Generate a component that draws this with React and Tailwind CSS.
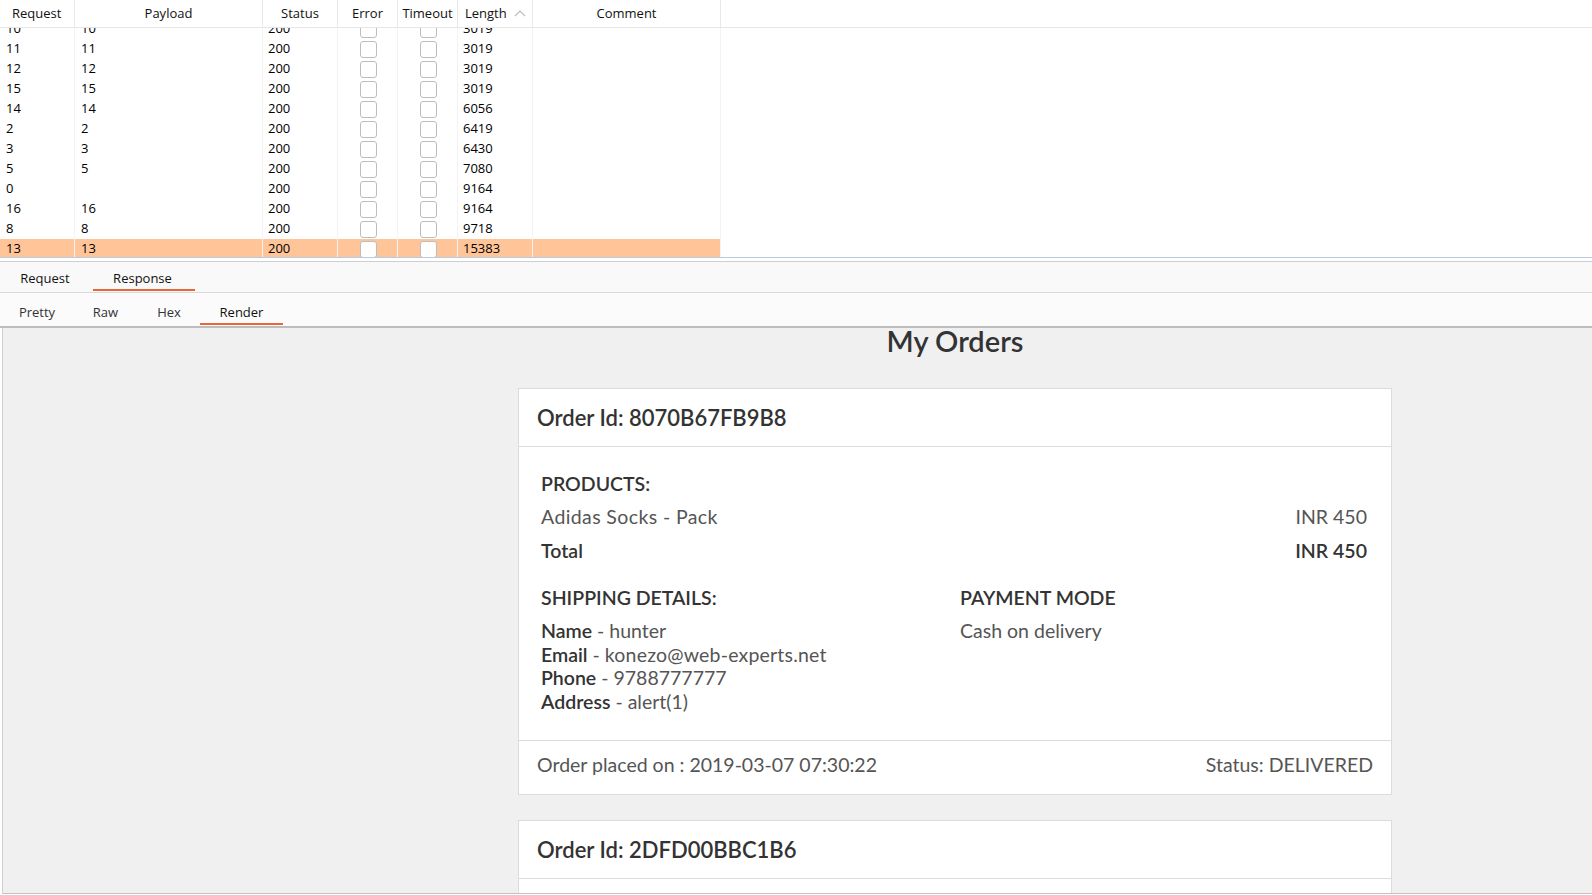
import React from "react";

const rows = [
  ["10", "10", "200", "3019"],
  ["11", "11", "200", "3019"],
  ["12", "12", "200", "3019"],
  ["15", "15", "200", "3019"],
  ["14", "14", "200", "6056"],
  ["2", "2", "200", "6419"],
  ["3", "3", "200", "6430"],
  ["5", "5", "200", "7080"],
  ["0", "", "200", "9164"],
  ["16", "16", "200", "9164"],
  ["8", "8", "200", "9718"],
  ["13", "13", "200", "15383"],
];

function Check() {
  return <div className="w-[17px] h-[17px] rounded-[3px] border border-[#bdbdbd] bg-white" />;
}

function Table() {
  return (
    <div className="h-[257px] bg-white">
      <div className="flex h-[28px] border-b border-[#e6e6e6] text-[13px] text-[#111]">
        <div className="w-[75px] h-full flex items-center pl-[12px] border-r border-[#e8e8e8]">Request</div>
        <div className="w-[188px] h-full flex items-center justify-center border-r border-[#e8e8e8]">Payload</div>
        <div className="w-[75px] h-full flex items-center justify-center border-r border-[#e8e8e8]">Status</div>
        <div className="w-[60px] h-full flex items-center justify-center border-r border-[#e8e8e8]">Error</div>
        <div className="w-[60px] h-full flex items-center justify-center border-r border-[#e8e8e8]">Timeout</div>
        <div className="w-[75px] h-full flex items-center pl-[7px] gap-[7px] border-r border-[#e8e8e8]">
          <span>Length</span>
          <svg width="12" height="8" viewBox="0 0 12 8" className="mt-[-2px]">
            <polyline points="1,7 6,2 11,7" fill="none" stroke="#bdbdbd" strokeWidth="1.2" />
          </svg>
        </div>
        <div className="w-[188px] h-full flex items-center justify-center border-r border-[#e8e8e8]">Comment</div>
        <div className="flex-1" />
      </div>
      <div className="h-[229px] overflow-hidden">
        <div className="mt-[-9px] text-[13px] text-[#000]">
          {rows.map((r, i) => {
            const sel = i === rows.length - 1;
            return (
              <div key={i} className={"flex h-[20px] w-[721px] " + (sel ? "bg-[#ffc599]" : "bg-white")}>
                <div className="w-[75px] h-full flex items-center pl-[6px] border-r border-[#f3f3f3]">{r[0]}</div>
                <div className="w-[188px] h-full flex items-center pl-[6px] border-r border-[#f3f3f3]">{r[1]}</div>
                <div className="w-[75px] h-full flex items-center pl-[5px] border-r border-[#f3f3f3]">{r[2]}</div>
                <div className="w-[60px] h-full flex items-center justify-center pl-[2px] border-r border-[#f3f3f3]"><Check /></div>
                <div className="w-[60px] h-full flex items-center justify-center pl-[2px] border-r border-[#f3f3f3]"><Check /></div>
                <div className="w-[75px] h-full flex items-center pl-[5px] border-r border-[#f3f3f3]">{r[3]}</div>
                <div className="w-[188px] h-full border-r border-[#f3f3f3]" />
              </div>
            );
          })}
        </div>
      </div>
    </div>
  );
}

function Tabs() {
  return (
    <div>
      <div className="h-px bg-[#b7cbe3]" />
      <div className="h-[3px] bg-white" />
      <div className="h-px bg-[#cfcfcf]" />
      <div className="h-[31px] bg-[#f9f9f9] border-b border-[#d9d9d9] flex text-[13px] text-[#111]">
        <div className="w-[90px] h-full flex items-center justify-center pt-[3px]">Request</div>
        <div className="w-[3px]" />
        <div className="w-[102px] h-full flex items-center justify-center pt-[3px] relative">
          <span className="pr-[3px]">Response</span>
          <div className="absolute left-0 right-0 bottom-[1px] h-[2px] bg-[#e8673a]" />
        </div>
      </div>
      <div className="h-[35px] bg-[#fbfbfb] border-b-2 border-[#bcbcbc] flex pl-px text-[13px] text-[#333]">
        <div className="w-[72px] h-full flex items-center justify-center pt-[6px]">Pretty</div>
        <div className="w-[65px] h-full flex items-center justify-center pt-[6px]">Raw</div>
        <div className="w-[62px] h-full flex items-center justify-center pt-[6px]">Hex</div>
        <div className="w-[83px] h-full flex items-center justify-center pt-[6px] relative text-[#111]">
          Render
          <div className="absolute left-0 right-0 bottom-px h-[2px] bg-[#e8673a]" />
        </div>
      </div>
    </div>
  );
}

function OrderCard({ id, full }) {
  return (
    <div className="bg-white border border-[#dcdcdc]">
      <div className="h-[58px] border-b border-[#dcdcdc] pl-[18px] flex items-center text-[22px] font-semibold text-[#333] pb-[1px]">
        Order Id: {id}
      </div>
      {full && (
        <>
          <div className="pl-[22px] pr-[24px] pt-[20px] pb-[27px] text-[19.5px] text-[#555]">
            <div className="h-[33px] leading-[33px] font-semibold text-[#333]">PRODUCTS:</div>
            <div className="h-[34px] leading-[34px] flex justify-between">
              <span className="tracking-[0.02em]">Adidas Socks - Pack</span>
              <span>INR 450</span>
            </div>
            <div className="h-[34px] leading-[34px] flex justify-between font-semibold text-[#333]">
              <span>Total</span>
              <span>INR 450</span>
            </div>
            <div className="mt-[13px] grid grid-cols-2 gap-x-[12px]">
              <div>
                <div className="h-[34px] leading-[34px] font-semibold text-[#333]">SHIPPING DETAILS:</div>
                <div className="mt-[4px] leading-[23.5px]">
                  <div><span className="font-semibold text-[#333]">Name</span> - hunter</div>
                  <div><span className="font-semibold text-[#333]">Email</span> - <span className="tracking-[0.01em]">konezo@web-experts.net</span></div>
                  <div><span className="font-semibold text-[#333]">Phone</span> - 9788777777</div>
                  <div><span className="font-semibold text-[#333]">Address</span> - alert(1)</div>
                </div>
              </div>
              <div>
                <div className="h-[34px] leading-[34px] font-semibold text-[#333]">PAYMENT MODE</div>
                <div className="mt-[4px] leading-[24px]">Cash on delivery</div>
              </div>
            </div>
          </div>
          <div className="border-t border-[#dcdcdc] h-[54px] px-[18px] pt-[12px] flex justify-between text-[19.5px] leading-[24px] text-[#555]">
            <span>Order placed on : 2019-03-07 07:30:22</span>
            <span>Status: DELIVERED</span>
          </div>
        </>
      )}
      {!full && <div className="h-[40px]" />}
    </div>
  );
}

function Render() {
  return (
    <div className="h-[566px] ml-[2px] border-l border-[#cfcfcf] border-b border-b-[#c4c4c4] bg-[#f0f0f0] overflow-hidden" style={{ fontFamily: "Lato, 'Open Sans', sans-serif" }}>
      <div className="ml-[515px] w-[874px]">
        <div className="h-[30px] leading-[26px] text-center text-[29px] font-semibold text-[#333]">My Orders</div>
        <div className="mt-[30px]">
          <OrderCard id="8070B67FB9B8" full />
        </div>
        <div className="mt-[25px]">
          <OrderCard id="2DFD00BBC1B6" />
        </div>
      </div>
    </div>
  );
}

export default function App() {
  return (
    <div className="w-[1592px] h-[895px] bg-white overflow-hidden" style={{ fontFamily: "'Open Sans', 'Noto Sans', sans-serif" }}>
      <Table />
      <Tabs />
      <Render />
    </div>
  );
}
